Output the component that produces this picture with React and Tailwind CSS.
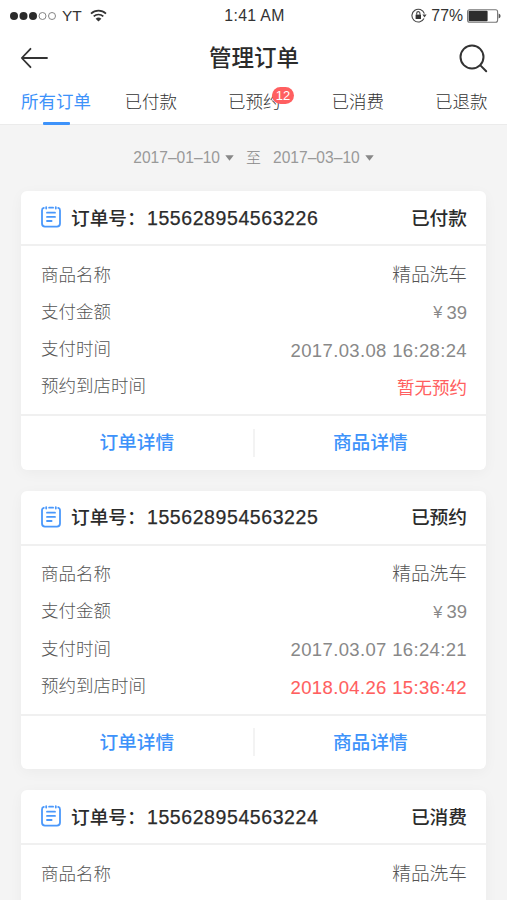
const orders = [
  { id: '155628954563226', status: '已付款', time: '2017.03.08 16:28:24', visit: '暂无预约' },
  { id: '155628954563225', status: '已预约', time: '2017.03.07 16:24:21', visit: '2018.04.26 15:36:42' },
  { id: '155628954563224', status: '已消费' },
];

const tabs = ['所有订单', '已付款', '已预约', '已消费', '已退款'];

function StatusBar() {
  return (
    <div className="flex h-[31px] items-center justify-between pl-[10px] pr-[6px] text-[#333]">
      <div className="flex w-[180px] items-center">
        <svg width="46" height="10" viewBox="0 0 46 10">
          <circle cx="4" cy="5" r="4" fill="#2b2b2b" />
          <circle cx="13.5" cy="5" r="4" fill="#2b2b2b" />
          <circle cx="23" cy="5" r="4" fill="#2b2b2b" />
          <circle cx="32.5" cy="5" r="3.5" fill="none" stroke="#777" strokeWidth=".9" />
          <circle cx="42" cy="5" r="3.5" fill="none" stroke="#777" strokeWidth=".9" />
        </svg>
        <span className="ml-[6px] text-[15.5px]">YT</span>
        <svg className="ml-[8px]" width="17" height="13" viewBox="0 0 17 13" fill="none" stroke="#333" strokeWidth="1.7">
          <path d="M1 4.6a10.8 10.8 0 0 1 15 0" />
          <path d="M3.7 7.4a7 7 0 0 1 9.6 0" />
          <path d="M5.6 9.7a4.4 4.4 0 0 1 5.8 0L8.5 12.5z" fill="#333" stroke="none" />
        </svg>
      </div>
      <span className="mr-[2px] text-[15.8px] tracking-[0.35px]">1:41 AM</span>
      <div className="flex w-[180px] items-center justify-end">
        <svg width="16" height="15" viewBox="0 0 16 15" fill="none" stroke="#444" strokeWidth="1.1">
          <path d="M13.4 5.6A6.4 6.4 0 1 0 13 10.6" />
          <path d="M11.4 6.6h4.2l-2.1 2.8z" fill="#444" stroke="none" />
          <rect x="4.6" y="6.6" width="5.4" height="4.4" fill="#333" stroke="none" />
          <path d="M5.7 6.8V5.2a1.6 1.6 0 0 1 3.2 0v1.6" />
        </svg>
        <span className="ml-[4px] text-[15.8px]">77%</span>
        <svg className="ml-[4px]" width="34" height="14" viewBox="0 0 34 14">
          <rect x=".6" y=".8" width="30" height="12.4" rx="2" fill="none" stroke="#777" strokeWidth="1.1" />
          <rect x="1.6" y="1.8" width="19" height="10.4" rx="1" fill="#2d2d2d" />
          <path d="M31.6 4.6q2 .6 2 2.4t-2 2.4z" fill="#555" />
        </svg>
      </div>
    </div>
  );
}

function OrderIcon() {
  return (
    <svg className="mb-px" width="20" height="22" viewBox="0 0 20 22" fill="none" stroke="#4a98fb" strokeWidth="1.8" strokeLinecap="round">
      <path d="M2.8 1.9Q1 2.3 1 4.4v13.2Q1 20.6 4 20.6h12q3 0 3-3V4.4q0-2.1-1.8-2.5" />
      <path d="M5.2 1.2v1.4M14.8 1.2v1.4M8.1 1.7h4" />
      <path d="M6 6.7h8M6 10.9h8M6 15h4.6" />
    </svg>
  );
}

function Row({ label, children }) {
  return (
    <div className="flex h-[37.3px] items-center justify-between">
      <span className="text-[17.5px] font-light text-[#555]">{label}</span>
      {children}
    </div>
  );
}

function OrderCard({ order }) {
  const noVisit = order.visit === '暂无预约';
  return (
    <section className="h-[278.5px] shrink-0 rounded-[6px] bg-white shadow-[0_3px_14px_rgba(0,0,0,0.04)]">
      <header className="flex h-[55px] items-center border-b-2 border-[#f0f0f0] px-[20px] pr-[19px] text-[18.7px] font-medium text-[#2b2b2b]">
        <OrderIcon />
        <span className="ml-[10px] w-[76px] pt-[3px]">订单号：</span>
        <span className="pt-[2px] text-[19.5px] font-normal tracking-[0.58px] [-webkit-text-stroke:0.25px_#2b2b2b]">{order.id}</span>
        <span className="ml-auto pt-[3px]">{order.status}</span>
      </header>
      <div className="h-[170px] border-b-2 border-[#f0f0f0] pt-[10px]">
        <div className="pl-[20px] pr-[19px]">
          <Row label="商品名称">
            <span className="text-[18.7px] font-light text-[#555]">精品洗车</span>
          </Row>
          {order.time && (
            <>
              <Row label="支付金额">
                <span className="flex items-center pt-px text-[18.5px] text-[#888]">
                  <span className="mr-[4px] text-[16.5px]">¥</span>39
                </span>
              </Row>
              <Row label="支付时间">
                <span className="pt-[3px] text-[18.5px] tracking-[0.35px] text-[#888]">{order.time}</span>
              </Row>
              <Row label="预约到店时间">
                {noVisit ? (
                  <span className="pt-[3px] text-[17.5px] text-[#ff5f60]">{order.visit}</span>
                ) : (
                  <span className="pt-[3px] text-[18.5px] tracking-[0.35px] text-[#ff5f60] [-webkit-text-stroke:0.1px_#ff5f60]">{order.visit}</span>
                )}
              </Row>
            </>
          )}
        </div>
      </div>
      {order.time && (
        <footer className="flex h-[53.5px] items-center text-[18.7px] font-medium text-[#3d92fa]">
          <button className="flex-1 pt-px">订单详情</button>
          <span className="h-[28px] w-[2px] bg-[#f3f3f3]" />
          <button className="flex-1 pt-px">商品详情</button>
        </footer>
      )}
    </section>
  );
}

function DateField({ value }) {
  return (
    <span className="flex items-center">
      <span className="text-[15.6px]">{value}</span>
      <svg className="ml-[5px]" width="9" height="6" viewBox="0 0 9 6">
        <path d="M.3.3h8.4L4.5 5.7z" fill="#888" />
      </svg>
    </span>
  );
}

export default function App() {
  return (
    <div className="flex h-[900px] w-[507px] flex-col overflow-hidden bg-[#f4f4f4] font-['Liberation_Sans','Noto_Sans_CJK_SC',sans-serif]">
      <div className="h-[125px] shrink-0 border-b border-[#ebebeb] bg-white">
        <StatusBar />
        <div className="flex h-[54px] items-center justify-between pl-[20px] pr-[19px]">
          <svg width="29" height="22" viewBox="0 0 29 22" fill="none" stroke="#333" strokeWidth="1.8" strokeLinecap="round" strokeLinejoin="round">
            <path d="M27 11H2M10.5 1.8L1.8 11l8.7 9.2" />
          </svg>
          <h1 className="pt-[2px] text-[22.5px] font-medium text-[#2b2b2b]">管理订单</h1>
          <svg width="29" height="29" viewBox="0 0 29 29" fill="none" stroke="#333" strokeWidth="2" strokeLinecap="round">
            <circle cx="13" cy="13" r="11.5" />
            <path d="M21.4 21.4l5.8 5.8" />
          </svg>
        </div>
        <nav className="flex h-[39px] pl-[21px] text-[17.5px] font-light text-[#333]">
          {tabs.map((tab, i) => (
            <div key={tab} className={i === 4 ? 'shrink-0' : 'w-[103.5px] shrink-0'}>
              <div className={i === 0 ? 'flex w-[70px] flex-col items-center font-normal text-[#3d92fa]' : 'relative w-fit'}>
                <span className="block h-[37px] leading-[35px]">{tab}</span>
                {i === 0 && <span className="h-[3px] w-[27px] shrink-0 rounded-[1px] bg-[#3d92fa]" />}
                {i === 2 && (
                  <span className="absolute left-[44px] top-[2px] flex h-[17px] w-[22px] items-center justify-center rounded-full bg-[#ff5f60] text-[13px] font-normal text-white">
                    12
                  </span>
                )}
              </div>
            </div>
          ))}
        </nav>
      </div>
      <div className="flex h-[66px] shrink-0 items-center justify-center text-[#999]">
        <DateField value="2017–01–10" />
        <span className="mx-[12px] text-[15px] font-light text-[#888]">至</span>
        <DateField value="2017–03–10" />
      </div>
      <main className="flex flex-col gap-[21px] px-[21px]">
        {orders.map((order) => (
          <OrderCard key={order.id} order={order} />
        ))}
      </main>
    </div>
  );
}
